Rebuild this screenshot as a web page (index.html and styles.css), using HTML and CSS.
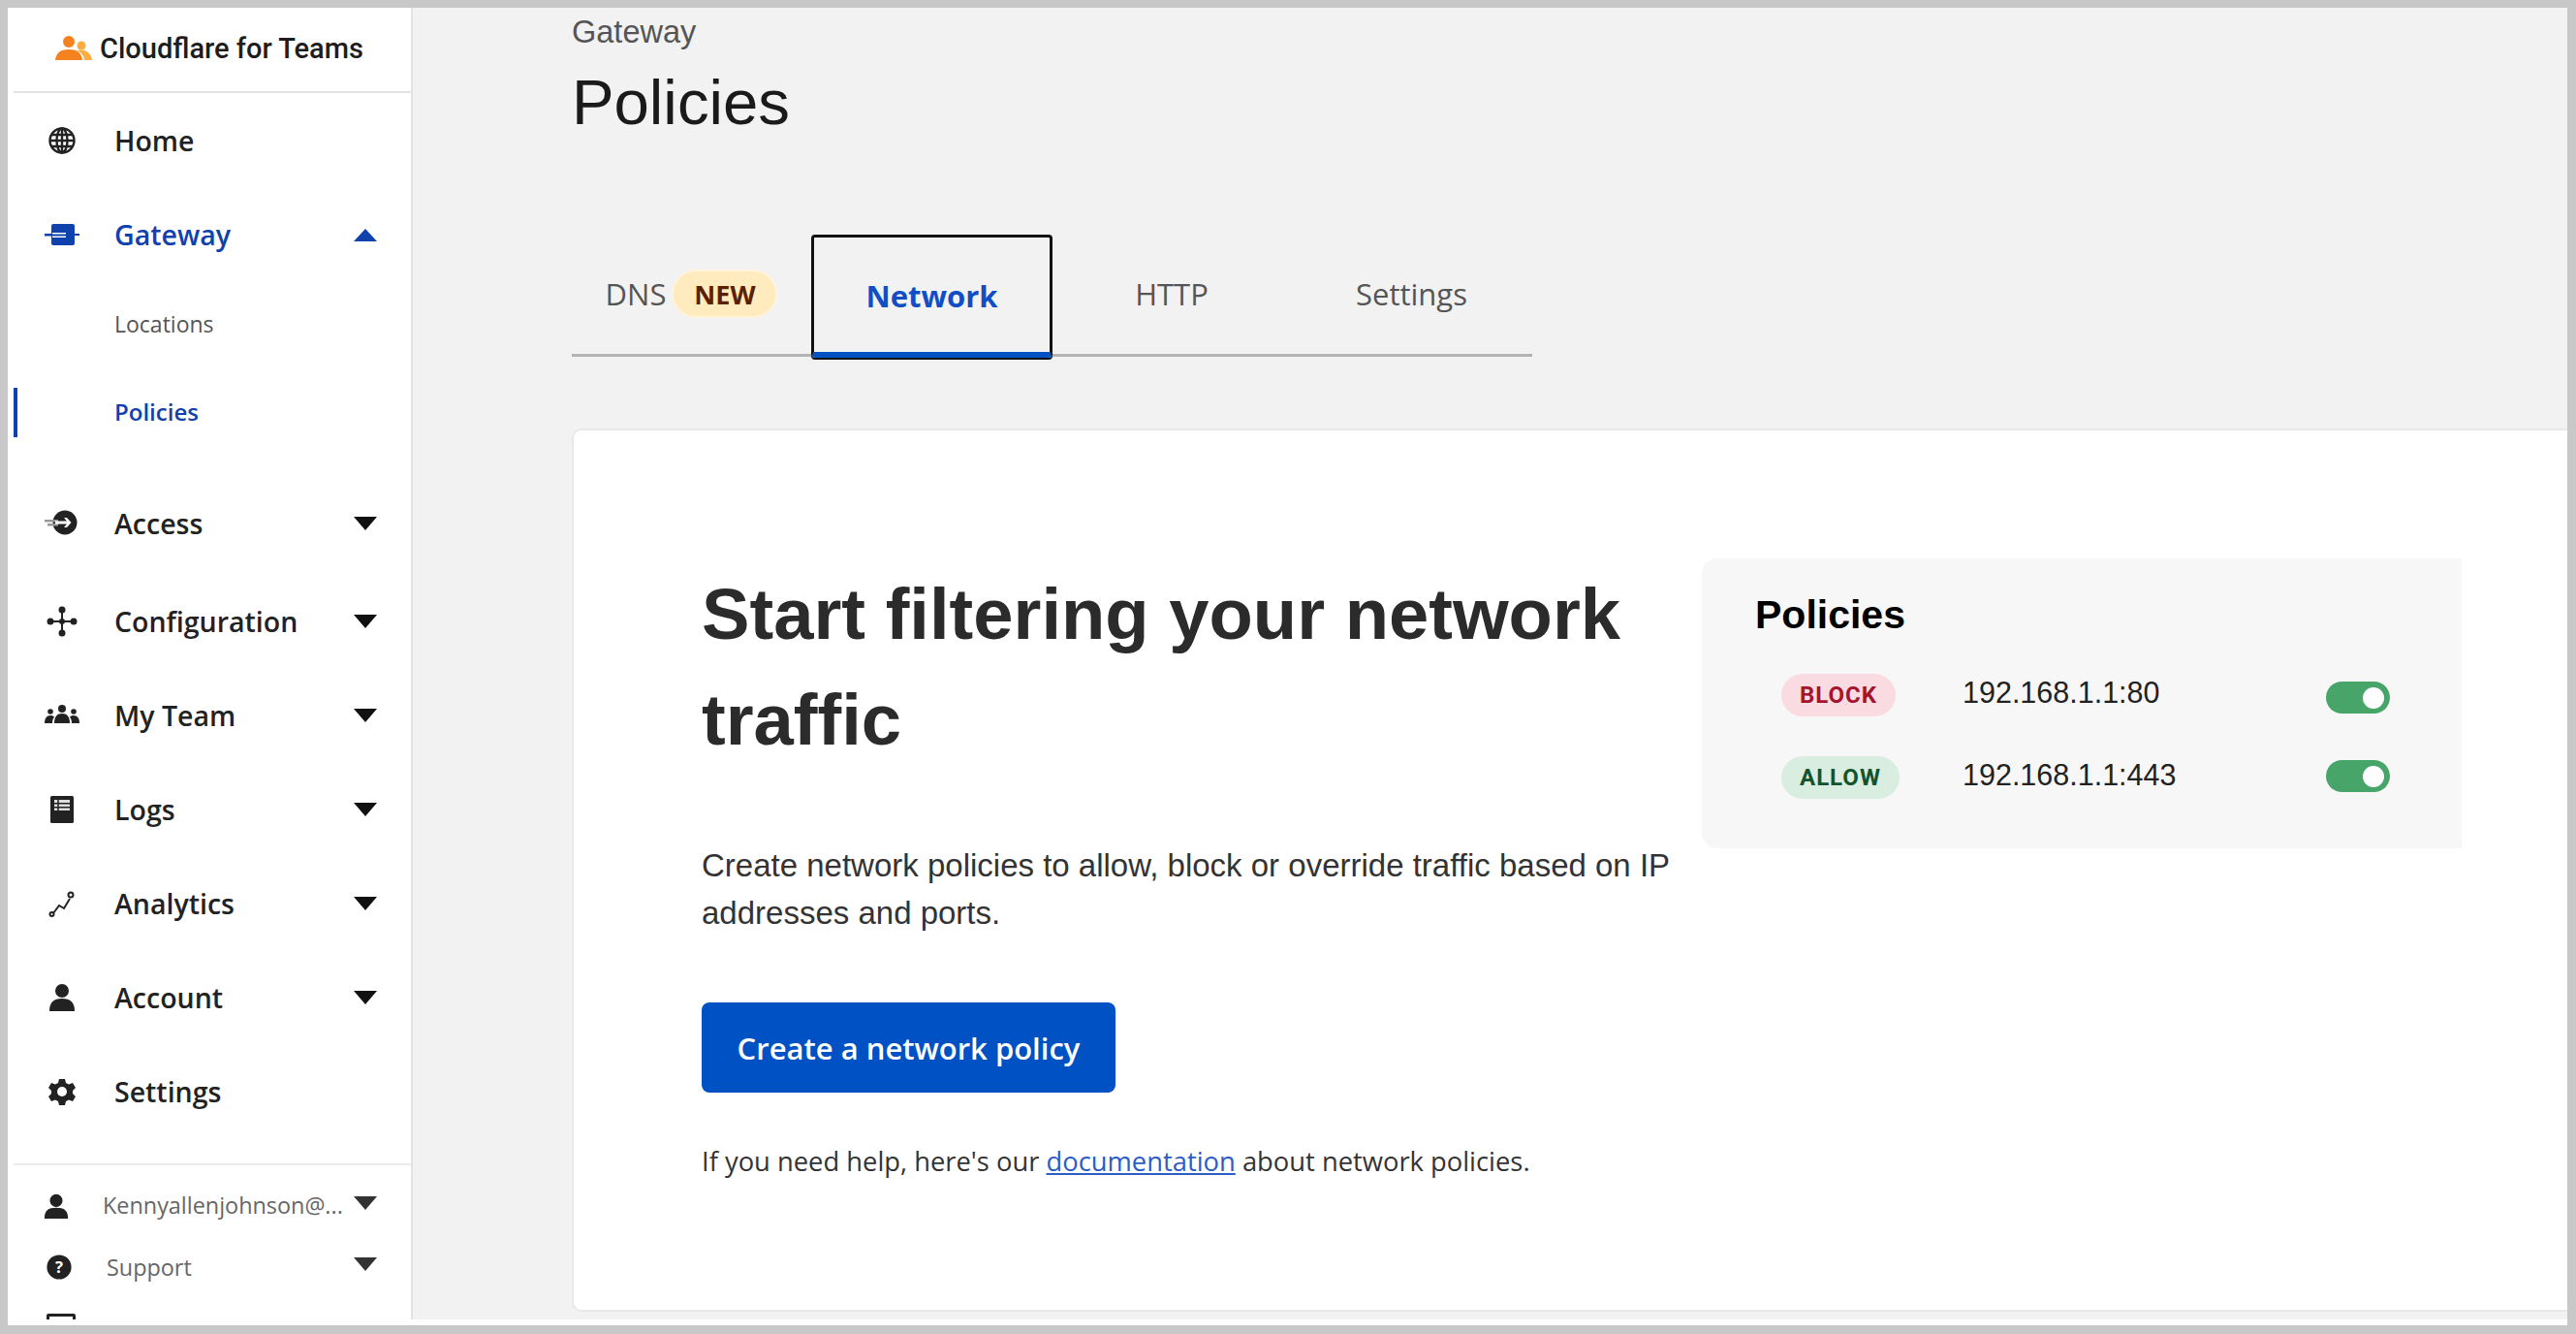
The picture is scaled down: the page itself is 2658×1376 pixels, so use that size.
FILE: index.html
```html
<!DOCTYPE html>
<html>
<head>
<link rel="stylesheet" href="styles.css">
</head>
<body>
<div class="frame">
  <div class="app">
    <aside class="sidebar">
      <div class="brand">
        <svg class="brand-icon" width="38" height="28" viewBox="0 0 38 28"><circle cx="14" cy="7" r="6" fill="#f6821f"/><circle cx="27" cy="11" r="4.5" fill="#fbad41"/><path d="M0 26c1-8 6-11 14-11s13 3 14 11z" fill="#f6821f"/><path d="M22 16c8-2 15 2 16 10h-8c0-4-3-8-8-10z" fill="#fbad41"/></svg>
        <span>Cloudflare for Teams</span>
      </div>
      <nav class="nav">
        <a class="nav-item">
          <svg class="icon" viewBox="0 0 44 44" fill="none" stroke="#222" stroke-width="2.4"><circle cx="22" cy="22" r="12.5"/><ellipse cx="22" cy="22" rx="5.5" ry="12.5"/><path d="M9.5 22h25M11 16h22M11 28h22M22 9.5v25"/></svg>
          <span>Home</span>
        </a>
        <a class="nav-item active">
          <svg class="icon" viewBox="0 0 44 44"><rect x="11" y="11" width="24" height="22" rx="2" fill="#0f42ad"/><path d="M4 21h36v2H4z" fill="#0f42ad"/><path d="M12 20h14v5H12z" fill="#fff"/><path d="M4 21.5h22v2H4z" fill="#0f42ad"/></svg>
          <span>Gateway</span>
          <i class="caret up"></i>
        </a>
        <a class="nav-sub">Locations</a>
        <a class="nav-sub current">Policies</a>
        <a class="nav-item first-closed">
          <svg class="icon" viewBox="0 0 44 44"><circle cx="25" cy="21" r="12.5" fill="#222"/><path d="M4 18h14v2.5H4zM7 22h11v2.5H7z" fill="#999"/><path d="M15 19.500h12l-3-3.500h3l4.500 5-4.500 5h-3l3-3.500H15z" fill="#fff"/></svg>
          <span>Access</span>
          <i class="caret"></i>
        </a>
        <a class="nav-item">
          <svg class="icon" viewBox="0 0 44 44" fill="#222"><path d="M21 10h2v24h-2zM10 21h24v2H10z"/><circle cx="22" cy="10" r="3.5"/><circle cx="22" cy="34" r="3.5"/><circle cx="10" cy="22" r="3.5"/><circle cx="34" cy="22" r="3.5"/><circle cx="22" cy="22" r="3"/></svg>
          <span>Configuration</span>
          <i class="caret"></i>
        </a>
        <a class="nav-item">
          <svg class="icon" viewBox="0 0 44 44" fill="#222"><circle cx="22" cy="15" r="4"/><path d="M14 30c0-7 3-10 8-10s8 3 8 10z"/><circle cx="10" cy="18" r="2.8"/><path d="M4 30c0-5 2-8 6-8 2 0 3 .5 4 1.5-1.5 2-2 4-2 6.5z"/><circle cx="34" cy="18" r="2.8"/><path d="M40 30c0-5-2-8-6-8-2 0-3 .5-4 1.5 1.5 2 2 4 2 6.5z"/></svg>
          <span>My Team</span>
          <i class="caret"></i>
        </a>
        <a class="nav-item">
          <svg class="icon" viewBox="0 0 44 44"><rect x="10" y="8" width="24" height="28" rx="1.5" fill="#222"/><path d="M14 12h16v3H14zM14 16.5h16V19H14zM14 20.5h16V23H14z" fill="#ddd"/><path d="M18 11v13" stroke="#222" stroke-width="1.5"/></svg>
          <span>Logs</span>
          <i class="caret"></i>
        </a>
        <a class="nav-item">
          <svg class="icon" viewBox="0 0 44 44" fill="none" stroke="#222" stroke-width="2"><path d="M13 32l6-8 5 3 6-10"/><circle cx="11.5" cy="33" r="2"/><circle cx="31" cy="13" r="2.5"/></svg>
          <span>Analytics</span>
          <i class="caret"></i>
        </a>
        <a class="nav-item">
          <svg class="icon" viewBox="0 0 44 44" fill="#222"><circle cx="22" cy="15" r="7"/><path d="M9 36c0-9 4-13 13-13s13 4 13 13z"/></svg>
          <span>Account</span>
          <i class="caret"></i>
        </a>
        <a class="nav-item">
          <svg class="icon" viewBox="0 0 44 44"><path d="M19 9h6l1 4 3 1.5 4-1.5 3 5-3 3v3l3 3-3 5-4-1.5-3 1.5-1 4h-6l-1-4-3-1.5-4 1.5-3-5 3-3v-3l-3-3 3-5 4 1.5 3-1.5z" fill="#222"/><circle cx="22" cy="22" r="5" fill="#fff"/></svg>
          <span>Settings</span>
        </a>
      </nav>
      <div class="side-footer">
        <a class="foot-item foot-user">
          <svg class="foot-icon" viewBox="0 0 30 30" fill="#222"><circle cx="15" cy="9" r="7"/><path d="M2 29c0-9 4-12 13-12s13 3 13 12z"/></svg>
          <span class="foot-label">Kennyallenjohnson@...</span>
          <i class="caret dim"></i>
        </a>
        <a class="foot-item foot-support">
          <svg class="foot-icon" viewBox="0 0 30 30"><circle cx="15" cy="15" r="13.5" fill="#222"/><text x="15" y="21" text-anchor="middle" class="foot-q">?</text></svg>
          <span class="foot-label">Support</span>
          <i class="caret dim"></i>
        </a>
        <div class="foot-clipped"></div>
      </div>
    </aside>

    <main class="main">
      <div class="crumb">Gateway</div>
      <h1 class="title">Policies</h1>

      <div class="tabs">
        <a class="tab">DNS <span class="new-pill">NEW</span></a>
        <a class="tab selected">Network</a>
        <a class="tab">HTTP</a>
        <a class="tab">Settings</a>
      </div>

      <section class="card">
        <div class="intro">
          <h2 class="headline">Start filtering your network traffic</h2>
          <p class="lead">Create network policies to allow, block or override traffic based on IP addresses and ports.</p>
          <a class="btn">Create a network policy</a>
          <p class="help">If you need help, here's our <a class="link">documentation</a> about network policies.</p>
        </div>
        <div class="panel">
          <div class="panel-title">Policies</div>
          <div class="rule rule-block">
            <span class="pill block">BLOCK</span>
            <span class="addr">192.168.1.1:80</span>
            <span class="toggle"></span>
          </div>
          <div class="rule rule-allow">
            <span class="pill allow">ALLOW</span>
            <span class="addr">192.168.1.1:443</span>
            <span class="toggle"></span>
          </div>
        </div>
      </section>
    </main>
  </div>
</div>
</body>
</html>
```

FILE: styles.css
```css
* {
  box-sizing: border-box;
}

body {
  margin: 0;
  font-family: "Open Sans", sans-serif;
}

.frame {
  width: 2658px;
  height: 1376px;
  border: solid #c8c8c8;
  border-width: 8px 9px 9px 8px;
  background: #fff;
  padding-bottom: 6px;
  overflow: hidden;
}

.app {
  display: flex;
  height: 100%;
  overflow: hidden;
}

/* sidebar */
.sidebar {
  width: 418px;
  flex: none;
  padding-left: 6px;
  background: #fff;
  border-right: 2px solid #e3e3e3;
  overflow: hidden;
}

.brand {
  height: 88px;
  border-bottom: 2px solid #e3e3e3;
  display: flex;
  align-items: center;
  gap: 8px;
  padding: 0 0 3px 43px;
  font-family: Roboto, sans-serif;
  font-weight: 500;
  font-size: 29px;
  color: #1d1d1d;
}

.nav {
  border-bottom: 2px solid #ececec;
  padding-bottom: 26px;
}

.nav-item {
  height: 97px;
  display: flex;
  align-items: center;
  padding-left: 28px;
  font-size: 28.5px;
  font-weight: 600;
  color: #222;
  position: relative;
}

.nav-item .icon {
  width: 44px;
  height: 44px;
  margin-right: 32px;
  flex: none;
}

.nav-item.active {
  color: #0f42ad;
}

.first-closed {
  margin-top: 21px;
  margin-bottom: 4px;
}

.nav-sub {
  height: 90px;
  display: flex;
  align-items: center;
  padding: 0 0 2px 104px;
  font-size: 23px;
  color: #555;
}

.nav-sub.current {
  color: #0f42ad;
  font-weight: 600;
  font-size: 24px;
  position: relative;
}

.nav-sub.current::before {
  content: "";
  position: absolute;
  left: 0;
  top: 20px;
  width: 4px;
  height: 51px;
  background: #0f42ad;
}

.caret {
  position: absolute;
  right: 35px;
  top: 50%;
  margin-top: -7px;
  width: 0;
  height: 0;
  border-left: 12px solid transparent;
  border-right: 12px solid transparent;
  border-top: 14px solid #111;
}

.caret.up {
  border-top: 0;
  border-bottom: 13px solid #0f42ad;
  margin-top: -6px;
}

.caret.dim {
  border-top-color: #333;
  margin-top: -10px;
}

.foot-item {
  display: flex;
  align-items: center;
  position: relative;
  font-size: 23.4px;
  color: #666;
}

.foot-user {
  height: 63px;
  margin-top: 10px;
  padding-left: 30px;
}

.foot-support {
  height: 63px;
  padding-left: 33px;
}

.foot-icon {
  width: 28px;
  height: 28px;
  flex: none;
}

.foot-q {
  font-family: "Open Sans", sans-serif;
  font-size: 18px;
  font-weight: 700;
  fill: #fff;
}

.foot-user .foot-label {
  margin-left: 34px;
  margin-bottom: 2px;
}

.foot-support .foot-label {
  margin-left: 35px;
}

.foot-clipped {
  width: 30px;
  height: 20px;
  margin: 17px 0 0 34px;
  border: 3px solid #222;
  border-radius: 2px;
}

/* main */
.main {
  flex: 1;
  min-width: 0;
  background: #f2f2f2;
  padding-left: 164px;
  overflow: hidden;
}

.crumb {
  height: 50px;
  line-height: 50px;
  font-family: "Liberation Sans", sans-serif;
  font-size: 32.5px;
  color: #555;
}

.title {
  margin: 8px 0 0;
  height: 80px;
  line-height: 80px;
  font-family: "Liberation Sans", sans-serif;
  font-size: 65.3px;
  font-weight: 400;
  color: #1a1a1a;
}

.tabs {
  width: 991px;
  height: 126px;
  margin-top: 96px;
  border-bottom: 3px solid #b3b3b3;
  display: grid;
  grid-template-columns: 247px 249px 246px 249px;
}

.tab {
  height: 122px;
  display: flex;
  align-items: center;
  justify-content: center;
  gap: 6px;
  font-size: 31px;
  color: #555;
}

.tab.selected {
  height: 127px;
  padding-top: 2px;
  color: #0f4ec4;
  font-weight: 700;
  border: 3px solid #111;
  border-bottom-width: 6px;
  border-bottom-color: #0051c3;
  border-radius: 4px;
  box-shadow: 0 2px 0 #111;
}

.new-pill {
  width: 109px;
  height: 50px;
  border-radius: 25px;
  background: #ffebbd;
  border: 2px solid #fff3dc;
  color: #5b2000;
  font-weight: 700;
  font-size: 27px;
  display: flex;
  align-items: center;
  justify-content: center;
}

.card {
  width: 2100px;
  height: 911px;
  margin-top: 74px;
  padding: 135px 0 0 132px;
  background: #fff;
  border: 2px solid #e8e8e8;
  border-radius: 10px;
  display: flex;
}

.intro {
  width: 1032px;
  flex: none;
  color: #333;
}

.headline {
  margin: 0;
  font-family: "Liberation Sans", sans-serif;
  font-size: 74.2px;
  line-height: 109px;
  font-weight: 700;
  color: #2b2b2b;
}

.lead {
  margin: 71px 0 0;
  width: 1020px;
  font-family: "Liberation Sans", sans-serif;
  font-size: 33px;
  line-height: 49px;
}

.btn {
  margin-top: 68px;
  width: 427px;
  height: 93px;
  border-radius: 8px;
  background: #0051c3;
  color: #fff;
  font-size: 31px;
  font-weight: 600;
  display: flex;
  align-items: center;
  justify-content: center;
}

.help {
  margin: 51px 0 0;
  font-size: 27.35px;
  line-height: 40px;
  color: #333;
}

.link {
  color: #2c5cc5;
  text-decoration: underline;
}

.panel {
  width: 784px;
  height: 299px;
  flex: none;
  margin-top: -3px;
  padding: 32px 0 0 55px;
  background: #f7f7f7;
  border-radius: 16px 0 0 16px;
  font-family: "Liberation Sans", sans-serif;
}

.panel-title {
  font-size: 41px;
  line-height: 52px;
  font-weight: 700;
  color: #000;
  margin-bottom: 14px;
}

.rule {
  height: 85px;
  display: grid;
  grid-template-columns: 187px 375px 66px;
  align-items: center;
  padding-left: 27px;
}

.pill {
  justify-self: start;
  height: 44px;
  padding: 0 19px;
  border-radius: 22px;
  display: flex;
  align-items: center;
  font-family: Roboto, sans-serif;
  font-size: 24px;
  font-weight: 700;
  letter-spacing: 1px;
}

.pill.block {
  background: #fadbe1;
  color: #a5142e;
}

.pill.allow {
  background: #d9eee0;
  color: #14532d;
}

.addr {
  font-size: 30.5px;
  color: #222;
  margin-bottom: 4px;
}

.toggle {
  width: 66px;
  height: 33px;
  border-radius: 17px;
  background: #48a56a;
  position: relative;
}

.rule-block .toggle {
  margin-top: 6px;
}

.rule-allow .toggle {
  margin-bottom: 2px;
}

.toggle::after {
  content: "";
  position: absolute;
  right: 6px;
  top: 6px;
  width: 22px;
  height: 22px;
  border-radius: 50%;
  background: #fff;
}
```
